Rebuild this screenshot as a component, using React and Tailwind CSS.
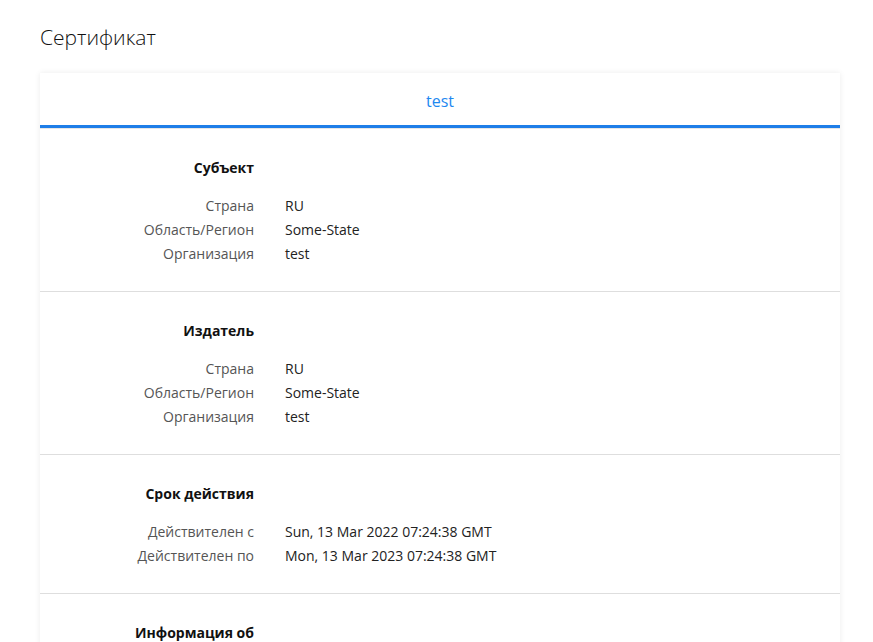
import React from "react";

const sections = [
  {
    title: "Субъект",
    rows: [
      ["Страна", "RU"],
      ["Область/Регион", "Some-State"],
      ["Организация", "test"],
    ],
  },
  {
    title: "Издатель",
    rows: [
      ["Страна", "RU"],
      ["Область/Регион", "Some-State"],
      ["Организация", "test"],
    ],
  },
  {
    title: "Срок действия",
    rows: [
      ["Действителен с", "Sun, 13 Mar 2022 07:24:38 GMT"],
      ["Действителен по", "Mon, 13 Mar 2023 07:24:38 GMT"],
    ],
  },
  {
    title: "Информация об",
    rows: [],
  },
];

const Section = ({ title, rows }) => (
  <div className="border-b border-[#dedede] pt-[26px] pb-[26px]">
    <div className="flex h-[24px] items-center">
      <div className="w-[214px] shrink-0 text-right font-bold text-[#111]">{title}</div>
    </div>
    <div className="mt-[14px] flex flex-col">
      {rows.map(([label, value]) => (
        <div key={label} className="flex h-[24px] items-center">
          <div className="w-[214px] shrink-0 text-right text-[#555]">{label}</div>
          <div className="pl-[31px] text-[#222]">{value}</div>
        </div>
      ))}
    </div>
  </div>
);

const App = () => {
  return (
    <div
      className="h-[642px] overflow-hidden bg-white px-[40px] pt-[23px] text-[14px]"
      style={{ fontFamily: '"Open Sans", "Noto Sans", sans-serif' }}
    >
      <h1 className="text-[21px] font-light leading-[28px] text-[#111]">Сертификат</h1>

      <div className="mt-[22px] w-[800px] bg-white shadow-[0_0_6px_rgba(0,0,0,0.08)]">
        <div className="flex h-[52px] items-center justify-center pt-[3px] text-[16px] text-[#1e88f0]">
          test
        </div>
        <div className="h-[3px] bg-[#1e7ee8]" />
        <div className="h-px bg-[#e6e6e6]" />
        {sections.map((s) => (
          <Section key={s.title} title={s.title} rows={s.rows} />
        ))}
      </div>
    </div>
  );
};

export default App;
